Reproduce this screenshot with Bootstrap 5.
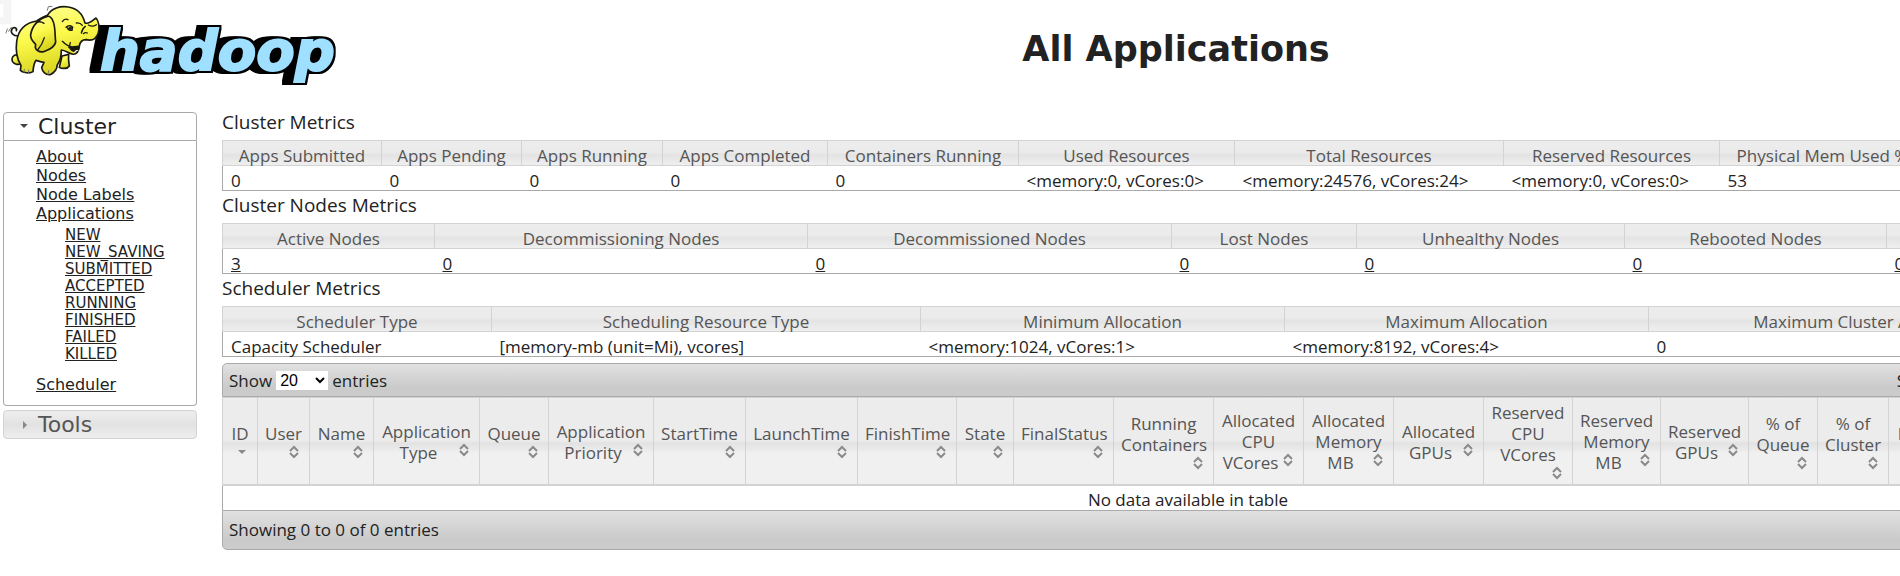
<!DOCTYPE html>
<html lang="en">
<head>
<meta charset="utf-8">
<meta name="viewport" content="width=device-width, initial-scale=1">
<title>All Applications</title>
<link rel="stylesheet" href="https://cdn.jsdelivr.net/npm/bootstrap@5.3.0/dist/css/bootstrap.min.css">
<style>
body { font-family: "Open Sans", "Noto Sans", sans-serif; font-size: 17px; line-height: 21px; color: #222; background: #fff; overflow-x: hidden; }
a { color: #222; text-decoration: underline; }
.page-grid { display: grid; grid-template-columns: 222px 1fr; min-width: 2154px; }
.masthead { height: 112px; }
.brand { width: 360px; height: 100px; }
.brand text { font-family: "DejaVu Sans", sans-serif; font-weight: bold; font-style: oblique; font-size: 168px; }
.page-title { font-family: "DejaVu Sans", sans-serif; font-weight: bold; font-size: 35px; line-height: 98px; margin: 0; padding-right: 24px; }
.side-menu { font-family: "DejaVu Sans", sans-serif; padding: 0 25px 0 3px; }
.side-head { font-size: 22px; line-height: 27px; font-weight: normal; margin: 0; padding: 0 0 0 15px; border: 1px solid #aaa; border-radius: 4px; width: 100%; display: flex; align-items: center; text-align: left; gap: 5px; }
.side-head.open { background: #fff; color: #222; border-radius: 4px 4px 0 0; }
.side-head.shut { background: linear-gradient(#ececec 0 10%, #e2e2e2 50%, #eee 100%); color: #555; border-color: #d3d3d3; }
.side-body { border: 1px solid #aaa; border-top: 0; border-radius: 0 0 4px 4px; padding: 6px 0 11px 32px; margin-bottom: 4px; font-size: 16px; }
.side-body ul { line-height: 19px; }
.side-body ul ul { font-size: 15px; line-height: 17px; padding: 4px 0 12px 29px; }
.metric-title { font-size: 19px; line-height: 21px; font-weight: normal; margin: 0; padding: 4px 0 7px; }
.grid-table { width: 100%; table-layout: fixed; border: 1px solid #aaa; white-space: nowrap; line-height: 19px; }
.grid-table th { font-weight: normal; text-align: center; color: #555; border: 1px solid #d3d3d3; background: linear-gradient(#ececec 0, #ebebeb 46%, #e3e3e3 54%, #efefef 100%); padding: 5px 8px 0; }
.grid-table td { padding: 5px 8px 0; }
.apps-table { border-width: 0 1px; line-height: 21px; }
.apps-table th { padding: 4px 7px 2px; height: 87px; vertical-align: middle; border-bottom-width: 2px; background: linear-gradient(#ececec 0, #ececec 49%, #e2e2e2 52%, #f0f0f0 64%, #f0f0f0 100%); }
.apps-table td { padding: 3px 8px 0; }
.sorter { float: right; width: 16px; height: 16px; fill: none; stroke: #8a8a8a; stroke-width: 2; }
.tool-strip { border: 1px solid #aaa; background: linear-gradient(#e1e1e1 0, #cacaca 75%, #ccc 100%); padding: 0 6px; }
.tool-strip.top-strip { height: 34px; border-radius: 5px 5px 0 0; margin-top: 6px; }
.tool-strip.end-strip { height: 40px; border-radius: 0 0 5px 5px; }
.tool-strip select { font: 16px "Liberation Sans", sans-serif; border: 0; background: #fff; color: #000; width: 52px; height: 19px; }
.tool-strip input { width: 188px; height: 22px; border: 1px solid #777; }
</style>
</head>
<body>
<div class="page-grid">
  <header class="masthead">
    <svg class="brand" viewBox="0 0 1080 300" role="img" aria-label="Hadoop logo">
      <defs>
        <linearGradient id="hide" x1="0" y1="0" x2=".3" y2="1"><stop offset="0" stop-color="#ffff9c"/><stop offset=".5" stop-color="#fbf94c"/><stop offset="1" stop-color="#d8d31e"/></linearGradient>
        <filter id="block" x="-10%" y="-10%" width="120%" height="120%" color-interpolation-filters="sRGB">
          <feMorphology in="SourceAlpha" operator="dilate" radius="6" result="edge"/>
          <feOffset in="edge" dx="-9" result="s1"/><feOffset in="edge" dx="-18" result="s2"/><feOffset in="edge" dx="-26" result="s3"/>
          <feMerge><feMergeNode in="s3"/><feMergeNode in="s2"/><feMergeNode in="s1"/><feMergeNode in="edge"/><feMergeNode in="SourceGraphic"/></feMerge>
        </filter>
      </defs>
      <path d="M0 0H34V72H0V52H10V12H0Z" fill="#f5f5f5"/>
      <text x="300" y="209" fill="#9fdfff" stroke="#9fdfff" stroke-width="6" filter="url(#block)">hadoop</text>
      <g fill="url(#hide)" stroke="#1a1a10" stroke-width="5" stroke-linejoin="round" stroke-linecap="round">
        <path d="M55 108C38 108 30 97 36 87C41 79 52 84 49 92" fill="none"/>
        <path d="M52 164C38 164 34 175 37 184C42 192 54 197 64 190Z"/>
        <path d="M186 168L206 163C204 180 207 190 208 198C202 208 184 206 178 202Z"/>
        <path d="M142 46C155 25 180 17 205 21C232 25 249 45 255 69C268 74 279 60 288 54C297 63 299 84 295 98C289 118 275 123 258 119C248 119 240 126 238 138C237 154 229 166 216 162C205 159 196 151 184 150C184 170 180 184 172 194C171 207 163 219 150 224C137 226 127 215 125 203L132 187C122 186 115 183 108 181C102 190 100 198 99 215C90 221 69 219 61 211L63 196C52 179 46 155 50 125C54 91 75 69 110 63C119 56 130 51 142 46Z"/>
        <path d="M142 49C118 55 97 75 92 103C90 119 103 127 107 134C102 150 119 158 131 155C149 149 165 139 167 126C164 102 167 77 158 61C153 50 146 48 142 49Z"/>
        <path d="M208 142C218 158 233 158 238 139Z" fill="#17170c"/>
        <path d="M222 158Q227 148 234 151" fill="#fff" stroke="#fff" stroke-width="2"/>
        <path d="M187 124Q202 139 214 140M211 128L207 142M198 82Q207 73 218 81L216 91Q205 92 202 83M187 65Q194 54 204 59M229 69Q240 67 247 76M244 99Q247 85 256 79M250 101Q256 96 262 99M265 75Q278 82 289 74M108 69Q119 61 132 70M113 150Q128 132 133 113" fill="none" stroke-width="4"/>
        <ellipse cx="211" cy="85" rx="6" ry="5" fill="#222" stroke="none"/>
        <path d="M18 99L22 87M26 94L34 82M142 31L145 20L156 19M72 217L73 208M85 220L86 210M144 223L146 212" fill="none" stroke="#777" stroke-width="3"/>
      </g>
    </svg>
  </header>
  <h1 class="page-title text-center">All Applications</h1>

  <nav class="side-menu" aria-label="Main">
    <button type="button" class="side-head open"><svg width="10" height="8" viewBox="0 0 10 8" aria-hidden="true"><path d="M1 1H9L5 5Z" fill="#444"/></svg><span class="ps-1">Cluster</span></button>
    <div class="side-body">
      <ul class="list-unstyled mb-0">
        <li><a href="#">About</a></li>
        <li><a href="#">Nodes</a></li>
        <li><a href="#">Node Labels</a></li>
        <li><a href="#">Applications</a>
          <ul class="list-unstyled">
            <li><a href="#">NEW</a></li>
            <li><a href="#">NEW_SAVING</a></li>
            <li><a href="#">SUBMITTED</a></li>
            <li><a href="#">ACCEPTED</a></li>
            <li><a href="#">RUNNING</a></li>
            <li><a href="#">FINISHED</a></li>
            <li><a href="#">FAILED</a></li>
            <li><a href="#">KILLED</a></li>
          </ul>
        </li>
        <li><a href="#">Scheduler</a></li>
      </ul>
    </div>
    <button type="button" class="side-head shut"><svg width="10" height="10" viewBox="0 0 10 10" aria-hidden="true"><path d="M4 1V9L8 5Z" fill="#888"/></svg><span class="ps-1">Tools</span></button>
  </nav>

  <main>
    <h2 class="metric-title pt-0">Cluster Metrics</h2>
    <table class="grid-table">
      <colgroup><col style="width:159px"><col style="width:140px"><col style="width:141px"><col style="width:165px"><col style="width:191px"><col style="width:216px"><col style="width:269px"><col style="width:216px"><col style="width:206px"><col></colgroup>
      <thead><tr><th>Apps Submitted</th><th>Apps Pending</th><th>Apps Running</th><th>Apps Completed</th><th>Containers Running</th><th>Used Resources</th><th>Total Resources</th><th>Reserved Resources</th><th>Physical Mem Used %</th><th></th></tr></thead>
      <tbody><tr><td>0</td><td>0</td><td>0</td><td>0</td><td>0</td><td>&lt;memory:0, vCores:0&gt;</td><td>&lt;memory:24576, vCores:24&gt;</td><td>&lt;memory:0, vCores:0&gt;</td><td>53</td><td></td></tr></tbody>
    </table>

    <h2 class="metric-title">Cluster Nodes Metrics</h2>
    <table class="grid-table">
      <colgroup><col style="width:212px"><col style="width:373px"><col style="width:364px"><col style="width:185px"><col style="width:268px"><col style="width:262px"><col></colgroup>
      <thead><tr><th>Active Nodes</th><th>Decommissioning Nodes</th><th>Decommissioned Nodes</th><th>Lost Nodes</th><th>Unhealthy Nodes</th><th>Rebooted Nodes</th><th></th></tr></thead>
      <tbody><tr><td><a href="#">3</a></td><td><a href="#">0</a></td><td><a href="#">0</a></td><td><a href="#">0</a></td><td><a href="#">0</a></td><td><a href="#">0</a></td><td><a href="#">0</a></td></tr></tbody>
    </table>

    <h2 class="metric-title">Scheduler Metrics</h2>
    <table class="grid-table">
      <colgroup><col style="width:269px"><col style="width:429px"><col style="width:364px"><col style="width:364px"><col></colgroup>
      <thead><tr><th>Scheduler Type</th><th>Scheduling Resource Type</th><th>Minimum Allocation</th><th>Maximum Allocation</th><th>Maximum Cluster Application Priority</th></tr></thead>
      <tbody><tr><td>Capacity Scheduler</td><td>[memory-mb (unit=Mi), vcores]</td><td>&lt;memory:1024, vCores:1&gt;</td><td>&lt;memory:8192, vCores:4&gt;</td><td>0</td></tr></tbody>
    </table>

    <div class="tool-strip top-strip d-flex align-items-center justify-content-between">
      <label class="d-flex align-items-center gap-1">Show <select><option>10</option><option selected>20</option><option>50</option><option>100</option></select> entries</label>
      <label class="d-flex align-items-center gap-1">Search: <input type="text"></label>
    </div>
    <svg class="d-none" aria-hidden="true"><symbol id="both" viewBox="0 0 16 16"><path d="M4 7L8 3L12 7M4 9L8 13L12 9"/></symbol><symbol id="desc" viewBox="0 0 16 16"><path d="M4 6H12L8 10Z" fill="#888" stroke="none"/></symbol></svg>
    <table class="grid-table apps-table">
      <colgroup><col style="width:35px"><col style="width:52px"><col style="width:64px"><col style="width:106px"><col style="width:69px"><col style="width:105px"><col style="width:92px"><col style="width:112px"><col style="width:99px"><col style="width:57px"><col style="width:100px"><col style="width:100px"><col style="width:90px"><col style="width:90px"><col style="width:90px"><col style="width:89px"><col style="width:88px"><col style="width:88px"><col style="width:69px"><col style="width:71px"><col style="width:88px"><col><col></colgroup>
      <thead><tr>
        <th>ID<svg class="sorter"><use href="#desc"/></svg></th>
        <th>User<svg class="sorter"><use href="#both"/></svg></th>
        <th>Name<svg class="sorter"><use href="#both"/></svg></th>
        <th>Application<br>Type<svg class="sorter"><use href="#both"/></svg></th>
        <th>Queue<svg class="sorter"><use href="#both"/></svg></th>
        <th>Application<br>Priority<svg class="sorter"><use href="#both"/></svg></th>
        <th>StartTime<svg class="sorter"><use href="#both"/></svg></th>
        <th>LaunchTime<svg class="sorter"><use href="#both"/></svg></th>
        <th>FinishTime<svg class="sorter"><use href="#both"/></svg></th>
        <th>State<svg class="sorter"><use href="#both"/></svg></th>
        <th>FinalStatus<svg class="sorter"><use href="#both"/></svg></th>
        <th>Running<br>Containers<svg class="sorter"><use href="#both"/></svg></th>
        <th>Allocated<br>CPU<br>VCores<svg class="sorter"><use href="#both"/></svg></th>
        <th>Allocated<br>Memory<br>MB<svg class="sorter"><use href="#both"/></svg></th>
        <th>Allocated<br>GPUs<svg class="sorter"><use href="#both"/></svg></th>
        <th>Reserved<br>CPU<br>VCores<br><svg class="sorter"><use href="#both"/></svg></th>
        <th>Reserved<br>Memory<br>MB<svg class="sorter"><use href="#both"/></svg></th>
        <th>Reserved<br>GPUs<svg class="sorter"><use href="#both"/></svg></th>
        <th>% of<br>Queue<svg class="sorter"><use href="#both"/></svg></th>
        <th>% of<br>Cluster<svg class="sorter"><use href="#both"/></svg></th>
        <th>Progress<svg class="sorter"><use href="#both"/></svg></th>
        <th></th><th></th>
      </tr></thead>
      <tbody><tr><td colspan="23" class="text-center">No data available in table</td></tr></tbody>
    </table>
    <div class="tool-strip end-strip d-flex align-items-center">Showing 0 to 0 of 0 entries</div>
  </main>
</div>
<script src="https://cdn.jsdelivr.net/npm/bootstrap@5.3.0/dist/js/bootstrap.bundle.min.js"></script>
</body>
</html>
